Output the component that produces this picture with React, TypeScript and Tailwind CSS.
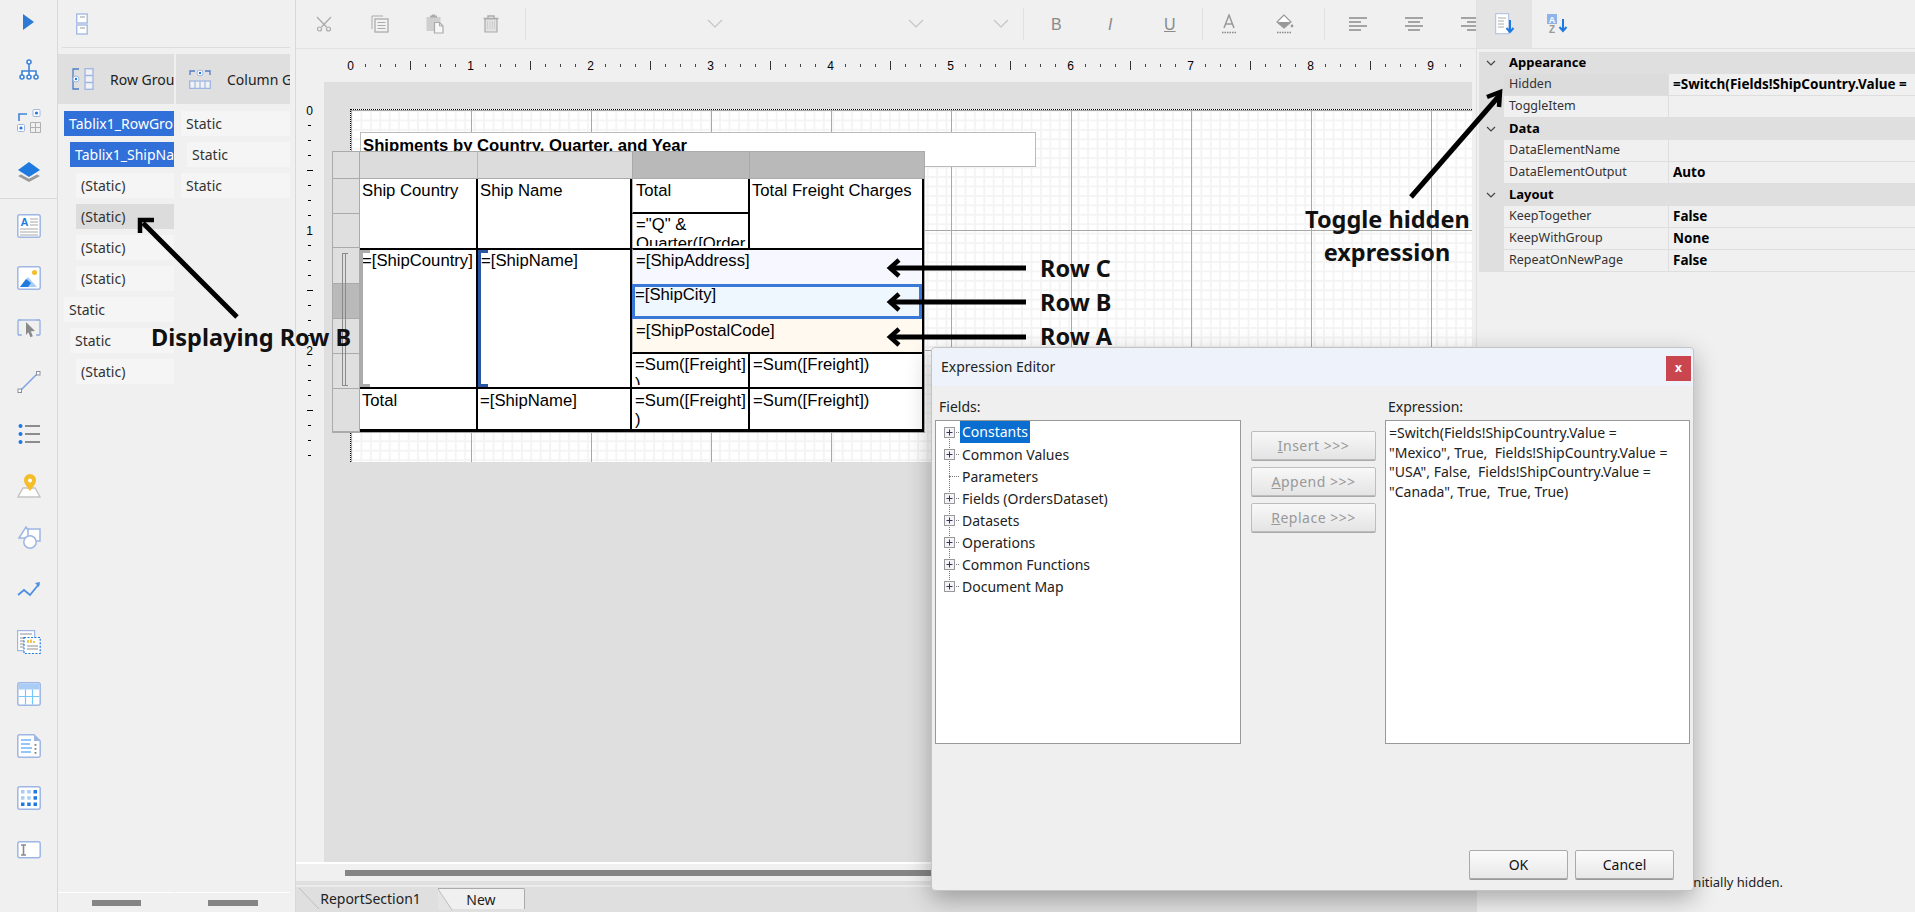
import React from "react";

const ui = "font-['Noto_Sans',sans-serif]";
const arial = "font-['Liberation_Sans',Arial,sans-serif]";

const I = ({ children, w = 24, h = 24, vb = "0 0 24 24" }: { children: React.ReactNode; w?: number; h?: number; vb?: string }) => (
  <svg width={w} height={h} viewBox={vb} fill="none">{children}</svg>
);

const B1 = "#9db6e3";
const BL = "#1f7ae0";

const toolIcons: React.ReactNode[] = [
  <I key="h"><g stroke="#3f84d8" strokeWidth="1.6" fill="#fff"><path d="M12 6v5M5 17v-4h14v4M12 11v6" /><circle cx="12" cy="4" r="2" /><circle cx="5" cy="19" r="2" /><circle cx="12" cy="19" r="2" /><circle cx="19" cy="19" r="2" /></g></I>,
  <I key="g"><path d="M2 12V5h8" stroke="#3f84d8" strokeWidth="1.6" /><rect x="16" y="0.5" width="7" height="7" rx="1" stroke={B1} fill="#fff" /><circle cx="19.5" cy="4" r="1.6" fill={BL} /><rect x="0.5" y="15.5" width="7" height="7" rx="1" stroke={B1} fill="#fff" /><circle cx="4" cy="19" r="1.6" fill={BL} /><path d="M13.5 13.5h10v10h-10zM18.5 13.5v10M13.5 18.5h10" stroke="#b0b0b0" /></I>,
  <I key="l"><path d="M1 16l11 6 11-6-3-1.6-8 4.4-8-4.4z" fill="#9a9a9a" /><path d="M12 2L1 10l11 7 11-7z" fill={BL} /></I>,
];
const paletteA: React.ReactNode[] = [
  <I key="t"><rect x="0.8" y="0.8" width="22.4" height="22.4" rx="2" fill="#fff" stroke={B1} strokeWidth="1.5" /><text x="3.5" y="12" fontSize="11" fontWeight="700" fill={BL} fontFamily="Liberation Sans">A</text><path d="M13 5h8M13 8h8M13 11h8M3 15h18M3 18h18M3 21h18" stroke="#a8a8a8" strokeWidth="1.2" /></I>,
  <I key="i"><rect x="0.8" y="0.8" width="22.4" height="22.4" rx="2" fill="#fff" stroke={B1} strokeWidth="1.5" /><circle cx="17.5" cy="6.5" r="2.5" fill="#f4bd2a" /><path d="M3 21l8-10 9 10z" fill="#a9cdf5" /><path d="M3 21l6-8 5 4-3 4z" fill={BL} /></I>,
  <I key="s"><path d="M5 17H2a1 1 0 01-1-1V3a1 1 0 011-1h3M19 2h3a1 1 0 011 1v13a1 1 0 01-1 1h-3" stroke={B1} strokeWidth="1.5" /><path d="M1 2h22M1 17h3M20 17h3" stroke={B1} strokeWidth="1.5" /><path d="M9 4l9 9-4.2.3 2 5-2.4 1-2-5L9 17z" fill="#8a8a8a" /></I>,
  <I key="ln"><path d="M3 21L21 3" stroke="#7aa0e6" strokeWidth="1.5" /><rect x="1" y="19" width="3.5" height="3.5" fill="#fff" stroke="#8a8fa0" /><rect x="19.5" y="1.5" width="3.5" height="3.5" fill="#fff" stroke="#8a8fa0" /></I>,
  <I key="lst"><g fill={BL}><circle cx="3.5" cy="4" r="2" /><circle cx="3.5" cy="12" r="2" /><circle cx="3.5" cy="20" r="2" /></g><path d="M8 4h15M8 12h15M8 20h15" stroke="#8c8c8c" strokeWidth="2.2" /></I>,
];
const paletteB: React.ReactNode[] = [
  <I key="m"><path d="M6 14h12l5 9H1z" fill="#fff" stroke="#c4c4c4" strokeWidth="1.4" /><path d="M13 17C9 12 7 9 7 6a6 6 0 0112 0c0 3-2 6-6 11z" fill="#f4bd2a" /><circle cx="13" cy="6.5" r="2" fill="#fff" /></I>,
  <I key="sh"><path d="M9 1l7 11H2z" fill="#fff" stroke={B1} strokeWidth="1.5" /><rect x="11" y="3" width="12" height="12" fill="#fff" stroke={B1} strokeWidth="1.5" /><circle cx="13" cy="16" r="6.2" fill="#fff" stroke={B1} strokeWidth="1.5" /></I>,
  <I key="c"><path d="M1 17l6-5 6 5 9-11" stroke="#4e8fdf" strokeWidth="1.8" /><path d="M18 5l5-1-1 5z" fill="#4e8fdf" /></I>,
  <I key="sb"><rect x="0.6" y="0.6" width="17" height="20" fill="#fff" stroke={B1} strokeWidth="1.2" /><path d="M3 4h12M3 8h4M3 11h4M3 14h4M3 17h4" stroke="#b4b4b4" strokeWidth="1.4" /><rect x="7" y="7.5" width="16.2" height="16" fill="#fff" stroke={BL} strokeWidth="1.2" strokeDasharray="2 1.5" /><path d="M11 13v-3M14 13V9.5M17 13v-2" stroke="#f0b62a" strokeWidth="1.6" /><path d="M10 16h11M10 19h11" stroke="#b4b4b4" strokeWidth="1.4" /></I>,
  <I key="tb"><rect x="0.8" y="0.8" width="22.4" height="22.4" rx="2" fill="#fff" stroke={B1} strokeWidth="1.5" /><rect x="1.5" y="1.5" width="21" height="6" fill="#a9cdf5" /><path d="M8.5 7.5v15M15.5 7.5v15M1.5 14.5h21" stroke="#76c8fb" strokeWidth="1.2" /></I>,
  <I key="d"><path d="M2.5.8H17L23.2 7v14.5a1.7 1.7 0 01-1.7 1.7h-19A1.7 1.7 0 01.8 21.5v-19A1.7 1.7 0 012.5.8z" fill="#fff" stroke={B1} strokeWidth="1.5" /><path d="M17 1v6h6z" fill={B1} /><path d="M4 6h10M4 10h9M4 14h11M4 18h10" stroke="#93c6fb" strokeWidth="1.8" /><path d="M18.5 10v1.8M18.5 14v1.8M18.5 18v1.8" stroke="#7f7f7f" strokeWidth="1.8" /></I>,
  <I key="mx"><rect x="0.8" y="0.8" width="22.4" height="22.4" rx="2" fill="#fff" stroke={B1} strokeWidth="1.5" /><g fill="#a9cdf5"><rect x="4" y="4" width="3.5" height="3.5" /><rect x="10.2" y="4" width="3.5" height="3.5" /><rect x="4" y="10.2" width="3.5" height="3.5" /><rect x="10.2" y="10.2" width="3.5" height="3.5" /></g><g fill={BL}><rect x="16.5" y="4" width="3.5" height="3.5" /><rect x="16.5" y="10.2" width="3.5" height="3.5" /><rect x="4" y="16.5" width="3.5" height="3.5" /><rect x="10.2" y="16.5" width="3.5" height="3.5" /><rect x="16.5" y="16.5" width="3.5" height="3.5" /></g></I>,
  <I key="inp" h={18} vb="0 0 24 18"><rect x="0.8" y="0.8" width="22.4" height="16" rx="2" fill="#fff" stroke={B1} strokeWidth="1.5" /><path d="M4 4h5M4 14h5M6.5 4v10" stroke="#8a8a8a" strokeWidth="1.6" /></I>,
];

function LeftBar() {
  return (
    <div className="flex w-[58px] shrink-0 flex-col items-stretch border-r border-[#d9d9d9]">
      <div className="flex h-[44px] items-center justify-center">
        <svg width="13" height="18" viewBox="0 0 13 18"><path d="M1 1l11 8-11 8z" fill="#2d7ad6" /></svg>
      </div>
      <div className="flex flex-col items-center">
        {toolIcons.map((ic, i) => <div key={i} className="flex h-[51px] w-full items-center justify-center">{ic}</div>)}
      </div>
      <div className="mt-[1px] h-px w-full bg-[#d9d9d9]" />
      <div className="mt-[1px] flex flex-col">
        {[...paletteA, ...paletteB].map((ic, i) => <div key={i} className="flex h-[52px] w-full items-center justify-center">{ic}</div>)}
      </div>
    </div>
  );
}

const RowCell = ({ t, ind, kind }: { t: string; ind: number; kind?: "blue" | "sel" }) => {
  const indent = ind === 0 ? "ml-0" : ind === 1 ? "ml-[6px]" : "ml-[12px]";
  const col = kind === "blue" ? "bg-[#3170d8] text-white" : kind === "sel" ? "bg-[#dcdcdc] text-[#333]" : "bg-[#f5f5f5] text-[#333]";
  return <div className={`h-[25px] overflow-hidden whitespace-nowrap pl-[5px] text-[14px] leading-[25px] ${indent} ${col}`}>{t}</div>;
};

function GroupPanel() {
  return (
    <div className={`flex w-[238px] shrink-0 flex-col border-r border-[#d9d9d9] ${ui}`}>
      <div className="flex h-[54px] shrink-0 flex-col pl-[4px] pr-[5px]">
        <div className="flex h-[48px] items-center border-b border-[#dcdcdc] pl-[14px]">
          <svg width="12" height="22" viewBox="0 0 12 22" fill="none"><rect x="0.7" y="1" width="10.5" height="9" fill="#fff" stroke={B1} strokeWidth="1.3" /><rect x="0.7" y="12" width="10.5" height="9" fill="#fff" stroke={B1} strokeWidth="1.3" /><path d="M4 4h5M4 15h5" stroke="#999" /></svg>
        </div>
      </div>
      <div className="flex h-[50px] shrink-0 pr-[5px]">
        <div className="flex w-[117px] items-center overflow-hidden whitespace-nowrap border-r border-[#f0f0f0] bg-[#dfdfdf] pl-[14px] text-[14px] text-[#222]">
          <svg className="mr-[16px] shrink-0" width="22" height="22" viewBox="0 0 22 22" fill="none"><path d="M7 1H1v20h6" stroke="#4d7fc6" strokeWidth="1.3" /><circle cx="4" cy="11" r="3" fill="#fff" stroke={B1} /><circle cx="4" cy="11" r="1.2" fill={BL} /><rect x="13" y=".7" width="8" height="20.6" stroke="#9db6e3" strokeWidth="1.3" fill="#f2f2f2" /><path d="M13 7.5h8M13 14.5h8" stroke="#9db6e3" strokeWidth="1.3" /></svg>
          Row Groups
        </div>
        <div className="ml-px flex min-w-0 flex-1 items-center overflow-hidden whitespace-nowrap bg-[#dfdfdf] pl-[13px] text-[14px] text-[#222]">
          <svg className="mr-[16px] shrink-0" width="22" height="20" viewBox="0 0 22 20" fill="none"><path d="M1 6V2h5M21 6V2h-5" stroke="#4d7fc6" strokeWidth="1.3" /><circle cx="11" cy="4" r="3" fill="#fff" stroke={B1} /><circle cx="11" cy="4" r="1.2" fill={BL} /><rect x=".7" y="12" width="20.6" height="7.4" stroke="#9db6e3" strokeWidth="1.3" fill="#f2f2f2" /><path d="M6 12v7M11 12v7M16 12v7" stroke="#9db6e3" strokeWidth="1.2" /></svg>
          Column Groups
        </div>
      </div>
      <div className="flex flex-1 gap-[7px] pl-[6px] pt-[7px] pr-[5px]">
        <div className="flex w-[110px] flex-col gap-[6px]">
          <RowCell t="Tablix1_RowGroup" ind={0} kind="blue" />
          <RowCell t="Tablix1_ShipName" ind={1} kind="blue" />
          <RowCell t="(Static)" ind={2} />
          <RowCell t="(Static)" ind={2} kind="sel" />
          <RowCell t="(Static)" ind={2} />
          <RowCell t="(Static)" ind={2} />
          <RowCell t="Static" ind={0} />
          <RowCell t="Static" ind={1} />
          <RowCell t="(Static)" ind={2} />
        </div>
        <div className="flex flex-1 flex-col gap-[6px]">
          <RowCell t="Static" ind={0} />
          <RowCell t="Static" ind={1} />
          <RowCell t="Static" ind={0} />
        </div>
      </div>
      <div className="flex h-[20px] shrink-0 pr-[5px]">
        <div className="flex w-[116px] justify-center border-t border-white pt-[7px]"><div className="h-[6px] w-[49px] bg-[#858585]" /></div>
        <div className="ml-px flex flex-1 justify-center border-t border-white pt-[7px]"><div className="h-[6px] w-[50px] bg-[#858585]" /></div>
      </div>
    </div>
  );
}

const G = "#ababab";
const cutIcons: React.ReactNode[] = [
  <svg key="cut" width="16" height="16" viewBox="0 0 16 16" fill="none"><path d="M1 1l9.5 10M15 1L5.5 11" stroke={G} strokeWidth="1.3" /><circle cx="3.5" cy="13" r="2" stroke={G} strokeWidth="1.2" /><circle cx="12.5" cy="13" r="2" stroke={G} strokeWidth="1.2" /></svg>,
  <svg key="copy" width="18" height="18" viewBox="0 0 18 18" fill="none"><path d="M1 14V1h11" stroke={G} /><rect x="4" y="4" width="13" height="13" fill="#f2f2f2" stroke={G} strokeWidth="1.3" /><path d="M6.5 7.5h8M6.5 10.5h8M6.5 13.5h8" stroke={G} /></svg>,
  <svg key="paste" width="18" height="20" viewBox="0 0 18 20" fill="none"><rect x="0.5" y="3" width="14" height="14" fill="#cfcfcf" /><path d="M4 3.5h7V1.5H9V.5H6v1H4z" fill="#ababab" /><path d="M8.5 8.5h5l3.5 3.5v7H8.5z" fill="#f6f6f6" stroke={G} strokeWidth="1.2" /><path d="M13.5 8.5V12H17" stroke={G} /></svg>,
  <svg key="del" width="16" height="18" viewBox="0 0 16 18" fill="none"><path d="M0.5 3.5h15M5 3.5V1h6v2.5" stroke={G} strokeWidth="1.4" /><path d="M2 4h12v13H2z" fill="#e2e2e2" stroke={G} strokeWidth="1.2" /><path d="M4.5 6.5v8M7 6.5v8M9.5 6.5v8M11.5 6.5v8" stroke="#bdbdbd" strokeDasharray="1 1" /></svg>,
];

const Sep = () => <div className="h-[32px] w-px shrink-0 bg-[#e0e0e0]" />;
const Chevron = () => <svg width="16" height="10" viewBox="0 0 16 10" fill="none"><path d="M1 1l7 7 7-7" stroke="#c4c4c4" strokeWidth="1.2" /></svg>;
const Fmt = ({ children, cls }: { children: React.ReactNode; cls: string }) => (
  <span className={`text-[16px] leading-none text-[#8a8a8a] ${arial} ${cls}`}>{children}</span>
);
const AlignIcon = ({ d }: { d: string }) => <svg width="18" height="14" viewBox="0 0 18 14" fill="none"><path d={d} stroke="#8a8a8a" strokeWidth="1.3" /></svg>;

function Toolbar() {
  return (
    <div className="flex h-[49px] shrink-0 items-center overflow-hidden border-b border-[#e2e2e2]">
      <div className="flex w-[229px] shrink-0 items-center justify-between pl-[18px] pr-[24px]">
        {cutIcons.map((ic, i) => <div key={i} className="flex w-[20px] justify-center">{ic}</div>)}
      </div>
      <Sep />
      <div className="flex w-[197px] shrink-0 justify-end"><Chevron /></div>
      <div className="flex w-[201px] shrink-0 justify-end"><Chevron /></div>
      <div className="flex w-[85px] shrink-0 justify-end"><Chevron /></div>
      <div className="ml-[14px]"><Sep /></div>
      <div className="flex w-[178px] shrink-0 items-center pl-[27px]">
        <div className="w-[57px]"><Fmt cls="">B</Fmt></div>
        <div className="w-[56px]"><Fmt cls="italic">I</Fmt></div>
        <div className="w-[38px]"><Fmt cls="underline">U</Fmt></div>
      </div>
      <Sep />
      <div className="flex w-[121px] shrink-0 items-center pl-[19px]">
        <svg className="mr-[40px]" width="14" height="20" viewBox="0 0 14 20" fill="none"><path d="M2 14L7 1l5 13M4 10h6" stroke="#999" strokeWidth="1.5" /><path d="M0 18.5h14" stroke="#888" strokeWidth="1.4" strokeDasharray="1.5 1" /></svg>
        <svg width="18" height="20" viewBox="0 0 18 20" fill="none"><path d="M8 1L1 8l7 6 7-6z" fill="#fff" stroke="#999" strokeWidth="1.2" /><path d="M1 8h14l-7 6z" fill="#999" /><circle cx="16" cy="12" r="1.4" fill="#999" /><path d="M1 18.5h15" stroke="#888" strokeWidth="1.4" strokeDasharray="1.5 1" /></svg>
      </div>
      <Sep />
      <div className="flex shrink-0 items-center gap-[38px] pl-[24px]">
        <AlignIcon d="M0 1h18M0 5h12M0 9h18M0 13h12" />
        <AlignIcon d="M0 1h18M3 5h12M0 9h18M3 13h12" />
        <AlignIcon d="M0 1h18M6 5h12M0 9h18M6 13h12" />
      </div>
    </div>
  );
}

function HRuler() {
  const cells = Array.from({ length: 75 }, (_, i) => i);
  return (
    <div className="flex h-[33px] shrink-0 items-center overflow-hidden pl-[47px] pr-[4px]">
      {cells.map((i) => (
        <div key={i} className="flex h-[12px] w-[15px] shrink-0 items-center justify-center">
          {i % 8 === 0 ? (
            <span className={`text-[12px] leading-none text-black ${arial}`}>{i / 8}</span>
          ) : i % 4 === 0 ? (
            <div className="h-[9px] w-px bg-[#333]" />
          ) : (
            <div className="h-[3px] w-px bg-[#444]" />
          )}
        </div>
      ))}
    </div>
  );
}

function VRuler() {
  const cells = Array.from({ length: 24 }, (_, i) => i);
  return (
    <div className="flex w-[28px] shrink-0 flex-col pt-[21px]">
      {cells.map((i) => (
        <div key={i} className="flex h-[15px] items-center justify-center pr-[1px]">
          {i % 8 === 0 ? (
            <span className={`text-[12px] leading-none text-black ${arial}`}>{i / 8}</span>
          ) : i % 4 === 0 ? (
            <div className="h-px w-[6px] bg-black" />
          ) : (
            <div className="h-px w-[3px] bg-black" />
          )}
        </div>
      ))}
    </div>
  );
}

const Cell = ({ children, cls = "bg-white" }: { children?: React.ReactNode; cls?: string }) => (
  <div className={`relative overflow-hidden whitespace-pre-wrap break-words pl-[2px] pr-0 pt-[1px] text-[16.7px] leading-[19px] text-black ${arial} ${cls}`}>{children}</div>
);

const Bracket = ({ color }: { color: string }) => (
  <>
    <div className={`absolute bottom-0 left-0 top-0 w-[3px] ${color}`} />
    <div className={`absolute left-0 top-0 h-[3px] w-[10px] ${color}`} />
    <div className={`absolute bottom-0 left-0 h-[3px] w-[10px] ${color}`} />
  </>
);

function Tablix() {
  const hRows = ["h-[35px]", "h-[34px]", "h-[36px]", "h-[35px]", "h-[35px]", "h-[35px]", "h-[43px]"];
  const dash = "border-l border-l-[#b5b5b5]";
  return (
    <div className="absolute left-[-19px] top-[41px] w-[593px] border border-[#aaa] bg-white">
      <div className="flex h-[27px] border-b border-[#aaa]">
        <div className="w-[27px] border-r border-[#aaa] bg-[#dfdfdf]" />
        <div className="w-[118px] border-r border-[#bbb] bg-[#dcdcdc]" />
        <div className="w-[154px] bg-[#dcdcdc]" />
        <div className="w-[118px] border-l border-r border-[#a9a9a9] bg-[#b9b9b9]" />
        <div className="flex-1 bg-[#b9b9b9]" />
      </div>
      <div className="flex">
        <div className="relative w-[27px] shrink-0 border-r border-[#aaa]">
          {hRows.map((h, i) => (
            <div key={i} className={`${h} border-b border-[#aaa] ${i === 3 ? "bg-[#b9b9b9]" : "bg-[#dfdfdf]"} last:border-b-0`} />
          ))}
          <div className="absolute left-[9px] top-[74px] h-[133px] w-[3px] border-y border-l border-[#8a8a8a]" />
          <div className="absolute left-[12px] top-[74px] h-[133px] w-[3px] border-y border-l border-[#8a8a8a]" />
        </div>
        <div className="grid flex-1 grid-cols-[118px_154px_118px_1fr] grid-rows-[35px_34px_36px_35px_35px_35px_43px] gap-0 border-r-2 border-black">
          <Cell cls="row-span-2 bg-white border-r-2 border-black pt-[2px]">Ship Country</Cell>
          <Cell cls="row-span-2 bg-white border-r-2 border-black pt-[2px]">Ship Name</Cell>
          <Cell cls={`bg-white border-b-2 border-r-2 border-b-black border-r-black pl-[3px] pt-[2px] ${dash}`}>Total</Cell>
          <Cell cls="row-span-2 bg-white pt-[2px]">Total Freight Charges</Cell>
          <Cell cls={`bg-white border-r-2 border-r-black pl-[3px] leading-[18px] ${dash}`}><div className="h-[31px] overflow-hidden">{'="Q" &\nQuarter([Order'}</div></Cell>

          <Cell cls="row-span-4 bg-white border-y-2 border-r-2 border-black">
            =[ShipCountry]
            <Bracket color="bg-[#acacac]" />
          </Cell>
          <Cell cls="row-span-4 bg-white border-y-2 border-r-2 border-black pl-[3px]">
            =[ShipName]
            <Bracket color="bg-[#2a56a6]" />
          </Cell>
          <Cell cls={`col-span-2 border-t-2 border-t-black bg-[#f7f8ff] pl-[3px] ${dash}`}>=[ShipAddress]</Cell>
          <Cell cls="col-span-2 bg-[#eef6fe] pl-[3px]">
            =[ShipCity]
            <div className="absolute inset-0 border-[3px] border-[#3a78d8]" />
          </Cell>
          <Cell cls={`col-span-2 border-b-2 border-b-black bg-[#fff9ef] pl-[3px] pt-[2px] ${dash}`}>=[ShipPostalCode]</Cell>
          <Cell cls="bg-white border-b-2 border-r-2 border-black pl-[3px]"><div className="h-[30px] overflow-hidden">{"=Sum([Freight]\n)"}</div></Cell>
          <Cell cls="bg-white border-b-2 border-black pl-[3px]">=Sum([Freight])</Cell>

          <Cell cls="bg-white border-b-[3px] border-r-2 border-black pt-[2px]">Total</Cell>
          <Cell cls="bg-white border-b-[3px] border-r-2 border-black pt-[2px]">=[ShipName]</Cell>
          <Cell cls="bg-white border-b-[3px] border-r-2 border-black pl-[3px] pt-[2px]">{"=Sum([Freight]\n)"}</Cell>
          <Cell cls="bg-white border-b-[3px] border-black pl-[3px] pt-[2px]">=Sum([Freight])</Cell>
        </div>
      </div>
    </div>
  );
}

function Canvas() {
  return (
    <div className="flex min-h-0 flex-1">
      <VRuler />
      <div className="flex-1 overflow-hidden bg-[#dfdfdf] pl-[26px] pt-[27px]">
        <div className="relative h-[353px] border-l border-t border-dotted border-black bg-white bg-[linear-gradient(to_right,#a8a8a8_1px,transparent_1px),linear-gradient(to_bottom,#a8a8a8_1px,transparent_1px),linear-gradient(to_right,#f4f4f4_1.5px,transparent_1.5px),linear-gradient(to_bottom,#f4f4f4_1.5px,transparent_1.5px)] bg-[size:120px_120px,120px_120px,9.45px_9.45px,9.45px_9.45px]">
          <div className={`absolute left-[9px] top-[22px] h-[35px] w-[676px] border border-[#bbb] bg-white pl-[2px] pt-[3px] text-[16.7px] font-bold leading-[20px] text-black ${arial}`}>
            Shipments by Country, Quarter, and Year
          </div>
          <Tablix />
        </div>
      </div>
      <div className="w-[4px] shrink-0" />
    </div>
  );
}

function Tabs() {
  return (
    <>
      <div className="flex h-[19px] shrink-0 flex-col">
        <div className="h-[2px] bg-white" />
        <div className="pl-[49px] pt-[6px]"><div className="h-[6px] w-[1000px] bg-[#858585]" /></div>
      </div>
      <div className="flex h-[31px] shrink-0 flex-col bg-[#dfdfdf] pt-[4px]">
        <div className="h-[2px] bg-[#ececec]" />
        <div className="flex pl-[3px] pt-[1px]">
          <div className={`relative flex h-[21px] w-[139px] items-center justify-center pl-[4px] text-[14px] text-[#222] ${ui}`}>
            <svg className="absolute left-0 top-0" width="24" height="21" fill="none"><path d="M0 0l20 21" stroke="#bdbdbd" /></svg>
            ReportSection1
          </div>
          <div className={`relative flex h-[21px] w-[87px] items-center justify-center rounded-tr-[2px] border-r border-t border-[#aaa] bg-[#f0f0f0] text-[14px] text-[#222] ${ui}`}>
            <svg className="absolute left-0 top-0" width="16" height="21" fill="none"><path d="M0 0l14 21H0z" fill="#e4e4e4" /><path d="M0 0l14 21" stroke="#bdbdbd" /></svg>
            New
          </div>
        </div>
      </div>
    </>
  );
}

const PropSection = ({ t }: { t: string }) => (
  <div className="flex h-[22px] items-center bg-[#dfdfdf] text-[13px] font-bold text-black">
    <svg className="ml-[7px] mr-[13px]" width="10" height="6" viewBox="0 0 10 6" fill="none"><path d="M1 1l4 4 4-4" stroke="#444" strokeWidth="1.2" /></svg>
    {t}
  </div>
);
const PropRow = ({ n, v, sel }: { n: string; v?: string; sel?: boolean }) => (
  <div className="flex h-[22px] bg-[#dfdfdf] pl-[25px]">
    <div className={`flex w-[165px] items-center border-b border-r border-[#dedede] pl-[5px] text-[12.5px] text-[#333] ${sel ? "bg-[#dcdcdc]" : "bg-[#f0f0f0]"}`}>{n}</div>
    <div className="flex flex-1 items-center overflow-hidden whitespace-nowrap border-b border-[#dedede] bg-[#f0f0f0] pl-[4px] text-[13.5px] font-bold text-black">{v}</div>
  </div>
);

function PropsPanel() {
  return (
    <div className={`flex w-[439px] shrink-0 flex-col border-l border-[#e0e0e0] bg-[#f0f0f0] ${ui}`}>
      <div className="flex h-[49px] shrink-0 items-center border-b border-[#e0e0e0]">
        <div className="flex h-full w-[55px] items-center justify-center bg-[#e4e4e4]">
          <svg width="20" height="22" viewBox="0 0 20 22" fill="none"><rect x=".7" y=".7" width="13" height="20" fill="#fff" stroke="#a9bde3" /><path d="M3 5h8M3 8h6M3 11h6M3 14h6" stroke="#aaa" /><path d="M15 7v11M11.5 15l3.5 4 3.5-4" stroke={BL} strokeWidth="2" /></svg>
        </div>
        <div className="flex w-[50px] items-center justify-center">
          <svg width="22" height="22" viewBox="0 0 22 22" fill="none"><rect x="1" y="1" width="10" height="10" fill="#8fb3e8" /><text x="2.8" y="9.5" fontSize="9" fontWeight="700" fill="#fff" fontFamily="Liberation Sans">A</text><text x="3" y="20" fontSize="10" fontWeight="700" fill="#999" fontFamily="Liberation Sans">Z</text><path d="M17 6v11M13.5 14l3.5 4 3.5-4" stroke={BL} strokeWidth="2" /></svg>
        </div>
      </div>
      <div className="ml-[2px] mt-[3px] flex flex-col">
        <PropSection t="Appearance" />
        <PropRow n="Hidden" v="=Switch(Fields!ShipCountry.Value =" sel />
        <PropRow n="ToggleItem" />
        <PropSection t="Data" />
        <PropRow n="DataElementName" />
        <PropRow n="DataElementOutput" v="Auto" />
        <PropSection t="Layout" />
        <PropRow n="KeepTogether" v="False" />
        <PropRow n="KeepWithGroup" v="None" />
        <PropRow n="RepeatOnNewPage" v="False" />
      </div>
      <div className="mt-auto pb-[21px] pl-[213px] text-[13px] leading-[18px] text-[#222]">initially hidden.</div>
    </div>
  );
}

const TreeRow = ({ t, sel, plus = true, last }: { t: string; sel?: boolean; plus?: boolean; last?: boolean }) => (
  <div className="relative flex h-[22px] items-center pl-[24px] text-[14px] text-[#222]">
    {!last && <div className="absolute left-[13px] top-[11px] h-[22px] border-l border-dotted border-[#777]" />}
    <div className="absolute left-[13px] top-[11px] w-[10px] border-t border-dotted border-[#777]" />
    {plus && (
      <svg className="absolute left-[8px] top-[6px]" width="11" height="11" viewBox="0 0 11 11"><rect x=".5" y=".5" width="10" height="10" fill="#f4f4f8" stroke="#999" /><path d="M2.5 5.5h6M5.5 2.5v6" stroke="#335" /></svg>
    )}
    <span className={sel ? "bg-[#0a6ed1] px-[2px] leading-[22px] text-white" : "px-[2px]"}>{t}</span>
  </div>
);

const DlgBtn = ({ t, u }: { t: string; u: string }) => (
  <div className="flex h-[29px] items-center justify-center rounded-[2px] border border-[#bdbdbd] bg-[linear-gradient(to_bottom,#f8f8f8,#e4e4e4)] text-[14px] tracking-[0.5px] text-[#999] shadow-[0_1px_0_#aaa]">
    <span className="underline">{u}</span>
    {t}
  </div>
);

function Dialog() {
  return (
    <div className={`absolute left-[931px] top-[347px] flex h-[544px] w-[763px] flex-col rounded-[4px] border border-[#c4c4c4] bg-[#efefef] shadow-[0_8px_24px_rgba(0,0,0,0.3)] ${ui}`}>
      <div className="flex h-[38px] shrink-0 items-center justify-between rounded-t-[4px] bg-[#eef2fb] pl-[9px] pr-[2px] text-[14px] text-[#222]">
        <span className="pb-[2px]">Expression Editor</span>
        <div className="mt-[2px] flex h-[25px] w-[25px] items-center justify-center bg-[#c9464f] text-[12px] font-bold leading-none text-white">x</div>
      </div>
      <div className="flex h-[34px] shrink-0 items-end px-[7px] pb-[3px] text-[14px] text-[#222]">
        <div className="w-[449px]">Fields:</div>
        <div>Expression:</div>
      </div>
      <div className="flex h-[324px] shrink-0 pl-[3px]">
        <div className="h-full w-[306px] border border-[#999] bg-white">
          <TreeRow t="Constants" sel />
          <TreeRow t="Common Values" />
          <TreeRow t="Parameters" plus={false} />
          <TreeRow t="Fields (OrdersDataset)" />
          <TreeRow t="Datasets" />
          <TreeRow t="Operations" />
          <TreeRow t="Common Functions" />
          <TreeRow t="Document Map" last />
        </div>
        <div className="flex w-[144px] flex-col gap-[7px] pl-[10px] pr-[9px] pt-[11px]">
          <DlgBtn u="I" t="nsert >>>" />
          <DlgBtn u="A" t="ppend >>>" />
          <DlgBtn u="R" t="eplace >>>" />
        </div>
        <div className="h-full w-[305px] whitespace-pre-wrap border border-[#999] bg-white pl-[3px] pt-[2px] text-[14px] leading-[19.5px] text-[#222]">
          {'=Switch(Fields!ShipCountry.Value =\n"Mexico", True,  Fields!ShipCountry.Value =\n"USA", False,  Fields!ShipCountry.Value =\n"Canada", True,  True, True)'}
        </div>
      </div>
      <div className="flex flex-1 items-start justify-end gap-[7px] pr-[19px] pt-[106px] text-[14px] text-[#111]">
        <div className="flex h-[29px] w-[99px] items-center justify-center rounded-[2px] border border-[#aaa] bg-[linear-gradient(to_bottom,#fbfbfb,#e8e8e8)] shadow-[0_1px_0_#999]">OK</div>
        <div className="flex h-[29px] w-[99px] items-center justify-center rounded-[2px] border border-[#aaa] bg-[linear-gradient(to_bottom,#fbfbfb,#e8e8e8)] shadow-[0_1px_0_#999]">Cancel</div>
      </div>
    </div>
  );
}

const Note = ({ cls, children }: { cls: string; children: React.ReactNode }) => (
  <div className={`absolute whitespace-nowrap text-center text-[23.5px] font-bold leading-[33px] text-[#111] ${ui} ${cls}`}>{children}</div>
);

function Annotations() {
  return (
    <>
      <svg className="pointer-events-none absolute left-0 top-0" width="1915" height="912" fill="none">
        <g stroke="#000" strokeWidth="5">
          <path d="M237 317L143 223" />
          <path d="M140 233v-13h14" strokeWidth="4.5" />
          <path d="M1026 268H892M1026 302H892M1026 337H892" />
          <path d="M899 260l-9 8 9 8M899 294l-9 8 9 8M899 329l-9 8 9 8" strokeWidth="4.5" />
          <path d="M1411 197L1499 96" />
          <path d="M1487 97l13-5-1 15" strokeWidth="4.5" />
        </g>
      </svg>
      <Note cls="left-[151px] top-[321px]">Displaying Row B</Note>
      <Note cls="left-[1040px] top-[252px]">Row C</Note>
      <Note cls="left-[1040px] top-[286px]">Row B</Note>
      <Note cls="left-[1040px] top-[320px]">Row A</Note>
      <Note cls="left-[1305px] top-[203px] w-[164px]">Toggle hidden<br />expression</Note>
    </>
  );
}

export default function App() {
  return (
    <div className="relative flex h-[912px] w-[1915px] overflow-hidden bg-[#f0f0f0]">
      <LeftBar />
      <GroupPanel />
      <div className="flex min-w-0 flex-1 flex-col">
        <Toolbar />
        <HRuler />
        <Canvas />
        <Tabs />
      </div>
      <PropsPanel />
      <Dialog />
      <Annotations />
    </div>
  );
}
